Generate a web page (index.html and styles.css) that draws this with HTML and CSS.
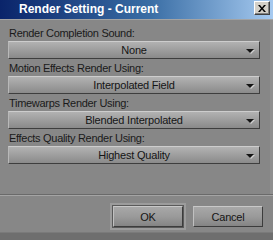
FILE: index.html
```html
<!DOCTYPE html>
<html lang="en">
<head>
    <meta charset="UTF-8">
    <title>Render Setting - Current</title>
    <link rel="stylesheet" href="styles.css">
</head>
<body>
    <div class="window">
        <div class="titlebar">
            <span class="title">Render Setting - Current</span>
            <button class="close-btn">
                <svg width="8" height="7" viewBox="0 0 8 7"><path d="M0 0h2l2 2.5 2-2.5h2l-3 3.5 3 3.5h-2l-2-2.5-2 2.5h-2l3-3.5z" fill="#000"/></svg>
            </button>
        </div>
        <div class="content">
            <div class="field">
                <label>Render Completion Sound:</label>
                <div class="dropdown">None</div>
            </div>
            <div class="field">
                <label>Motion Effects Render Using:</label>
                <div class="dropdown">Interpolated Field</div>
            </div>
            <div class="field">
                <label>Timewarps Render Using:</label>
                <div class="dropdown">Blended Interpolated</div>
            </div>
            <div class="field">
                <label>Effects Quality Render Using:</label>
                <div class="dropdown">Highest Quality</div>
            </div>
        </div>
        <div class="buttons">
            <div class="default-frame"><button class="btn">OK</button></div>
            <button class="btn">Cancel</button>
        </div>
        <div class="bottom-edge"></div>
    </div>
</body>
</html>
```

FILE: styles.css
```css
body {
    margin: 0;
    padding: 0;
    font-family: "Liberation Sans", Arial, sans-serif;
    background-color: #878787;
}

.window {
    width: 273px;
    height: 240px;
    display: flex;
    flex-direction: column;
    background-color: #878787;
}

.titlebar {
    height: 19px;
    display: flex;
    align-items: flex-start;
    justify-content: space-between;
    background: linear-gradient(to right, #0a246a 0%, #3a6ea5 55%, #a6caf0 100%);
    border-bottom: 1px solid #a3a3a3;
}

.title {
    color: #fff;
    font-weight: bold;
    font-size: 12px;
    line-height: 15px;
    padding: 2px 0 0 19px;
}

.close-btn {
    width: 16px;
    height: 14px;
    margin: 1px 3px 0 0;
    padding: 0;
    display: flex;
    align-items: center;
    justify-content: center;
    background-color: #d4d0c8;
    border: 1px solid;
    border-color: #fff #404040 #404040 #fff;
    box-shadow: inset -1px -1px 0 #808080;
}

.content {
    flex: 1;
    display: flex;
    flex-direction: column;
    gap: 3px;
    padding: 7px 10px 0 8px;
    border-left: 1px solid #a0a0a0;
    border-right: 3px solid #8f8f8f;
    margin-left: -1px;
}

.field {
    display: flex;
    flex-direction: column;
}

.field label {
    font-size: 11px;
    line-height: 13px;
    letter-spacing: -0.3px;
    color: #1a1a1a;
    padding-left: 1px;
}

.dropdown {
    position: relative;
    margin-top: 1px;
    height: 16px;
    line-height: 16px;
    font-size: 11px;
    letter-spacing: -0.2px;
    text-align: center;
    color: #151515;
    background: linear-gradient(to bottom, #b2b2b2 0%, #a0a0a0 45%, #8a8a8a 100%);
    border: 1px solid;
    border-color: #cdcdcd #3e3e3e #3e3e3e #b8b8b8;
}

.dropdown::after {
    content: "";
    position: absolute;
    right: 5px;
    top: 7px;
    border-left: 4px solid transparent;
    border-right: 4px solid transparent;
    border-top: 4px solid #141414;
    filter: drop-shadow(1px 1px 0 #d0d0d0);
}

.buttons {
    height: 38px;
    box-sizing: border-box;
    display: flex;
    justify-content: flex-end;
    align-items: flex-start;
    gap: 10px;
    padding: 11px 10px 0 0;
    border-top: 1px solid #6a6a6a;
    box-shadow: inset 0 1px 0 #a4a4a4;
}

.btn {
    width: 70px;
    height: 21px;
    padding: 0;
    font-family: "Liberation Sans", Arial, sans-serif;
    font-size: 11px;
    letter-spacing: -0.2px;
    color: #151515;
    background: linear-gradient(to bottom, #a8a8a8 0%, #9a9a9a 50%, #848484 100%);
    border: 1px solid;
    border-color: #c8c8c8 #3c3c3c #3c3c3c #c0c0c0;
}

.default-frame {
    display: flex;
    box-shadow: 0 0 0 1px #5a5a5a, 0 0 0 3px #9c9c9c;
}

.bottom-edge {
    height: 7px;
    background-color: #6e6e6e;
    border-top: 1px solid #7a7a7a;
}
```
